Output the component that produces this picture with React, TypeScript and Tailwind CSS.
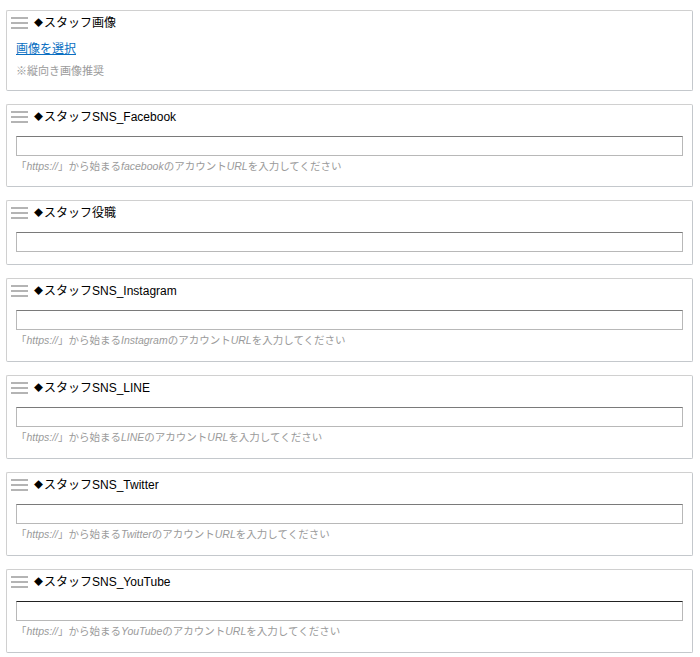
import type { ReactNode } from 'react'

const FONT = "font-['Liberation_Sans','Noto_Sans_CJK_JP',sans-serif]"

function Grip() {
  return (
    <svg width="17" height="14" viewBox="0 0 17 14" className="shrink-0">
      <rect x="0" y="1" width="17" height="2" fill="#b4b4b4" />
      <rect x="0" y="6" width="17" height="2" fill="#b4b4b4" />
      <rect x="0" y="11" width="17" height="2" fill="#b4b4b4" />
    </svg>
  )
}

function Card({ title, children }: { title: string; children: ReactNode }) {
  return (
    <div className="rounded-[2px] border border-[#d0d0d0] border-r-[#c4c8cc] border-b-[#c4c8cc] bg-white">
      <div className="mt-[2px] flex h-[20px] items-center gap-[6px] pl-[4px]">
        <Grip />
        <span className="flex items-center text-[12px] leading-none text-black">
          <span className="mr-[1px] text-[9px]">◆</span>
          {title}
        </span>
      </div>
      {children}
    </div>
  )
}

function UrlField({ service, focused, tight }: { service: string; focused?: boolean; tight?: boolean }) {
  return (
    <div className={`px-[9px] pt-[9px] ${tight ? 'pb-[13px]' : 'pb-[14px]'}`}>
      <input
        type="text"
        className={`block h-[20px] w-full border border-[#b8b8b8] bg-white outline-none ${
          focused ? 'border-t-[#222]' : 'border-t-[#7a7a7a]'
        }`}
      />
      <p className="mt-[3px] text-[10.5px] leading-[14px] text-[#9a9a9a]">
        「<i>https://</i>」から始まる<i>{service}</i>のアカウント<i>URL</i>を入力してください
      </p>
    </div>
  )
}

export default function App() {
  return (
    <div className={`${FONT} min-h-screen bg-white`}>
      <div className="flex flex-col gap-[13px] pt-[10px] pr-[7px] pb-[5px] pl-[6px]">
        <Card title="スタッフ画像">
          <div className="px-[9px] pt-[8px] pb-[12px]">
            <a href="#" className="block text-[12px] leading-[16px] text-[#0a6fc2] underline">
              画像を選択
            </a>
            <p className="mt-[7px] text-[11px] leading-[14px] text-[#9a9a9a]">※縦向き画像推奨</p>
          </div>
        </Card>

        <Card title="スタッフSNS_Facebook">
          <UrlField service="facebook" tight />
        </Card>

        <Card title="スタッフ役職">
          <div className="px-[9px] pt-[9px] pb-[12px]">
            <input
              type="text"
              className="block h-[20px] w-full border border-[#b8b8b8] border-t-[#7a7a7a] bg-white outline-none"
            />
          </div>
        </Card>

        <Card title="スタッフSNS_Instagram">
          <UrlField service="Instagram" />
        </Card>

        <Card title="スタッフSNS_LINE">
          <UrlField service="LINE" />
        </Card>

        <Card title="スタッフSNS_Twitter">
          <UrlField service="Twitter" />
        </Card>

        <Card title="スタッフSNS_YouTube">
          <UrlField service="YouTube" focused />
        </Card>
      </div>
    </div>
  )
}
